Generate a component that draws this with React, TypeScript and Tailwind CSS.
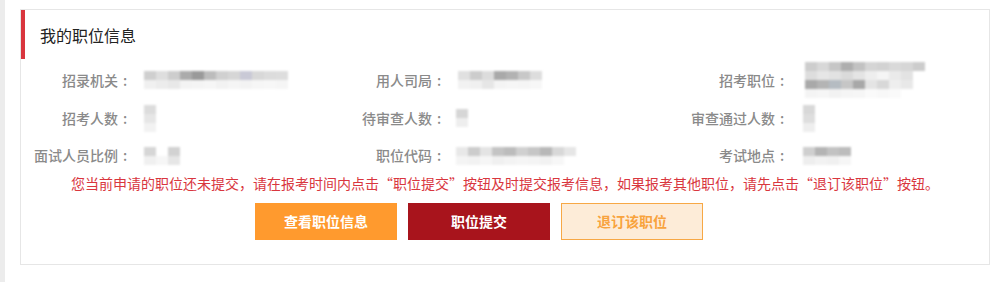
import React from "react";

type Cell = string;

function Mosaic({ rows, cell = 12, className = "" }: { rows: Cell[][]; cell?: number; className?: string }) {
  return (
    <div className={"flex flex-col blur-[0.8px] " + className}>
      {rows.map((r, i) => (
        <div key={i} className="flex">
          {r.map((c, j) => (
            <div key={j} style={{ backgroundColor: c, width: cell, height: cell * 0.75 }} />
          ))}
        </div>
      ))}
    </div>
  );
}

function Label({ w, children }: { w: string; children: React.ReactNode }) {
  return (
    <div className={"flex shrink-0 justify-end text-[14px] font-medium text-[#8a8a8a] " + w}>
      <span>{children}</span>
      <span className="inline-block w-[14px] text-center">:</span>
    </div>
  );
}

export default function App() {
  return (
    <div className="flex min-h-[282px] w-[1007px] bg-white font-['Microsoft_YaHei','Noto_Sans_CJK_SC',sans-serif]">
      <div className="w-[5px] shrink-0 bg-[#ececec]" />
      <div className="pl-[15px] pt-[9px]">
        <div className="w-[970px] border border-[#e6e6e6] bg-white pb-[24px]">
          <div className="flex h-[49px] items-center border-l-4 border-[#d9363e] pl-[15px] text-[16px] text-[#222]">
            我的职位信息
          </div>
          <div className="mt-[2px] flex h-[38px] items-center">
            <Label w="w-[111px]">招录机关</Label>
            <div className="w-[211px] pl-[12px]">
              <Mosaic
                cell={12}
                rows={[
                  ["#cfcfcf", "#dedede", "#cdcdcd", "#ababab", "#9a9a9a", "#bcbcbc", "#d0d0d0", "#d6d6d6", "#c9c9d6", "#d8d8d8", "#dcdcdc", "#dddddd"],
                  ["#f0f0f0", "#ececec", "#e8e8e8", "#f3f3f3", "#f4f4f4", "#f6f6f6", "#f2f2f2", "#f5f5f5", "#f3f3f3", "#f6f6f6", "#f7f7f7", "#f5f5f5"],
                ]}
              />
            </div>
            <Label w="w-[103px]">用人司局</Label>
            <div className="w-[220px] pl-[12px]">
              <Mosaic
                cell={12}
                rows={[
                  ["#e0e0e0", "#cccccc", "#dcdcdc", "#a9a9a9", "#b2b2b2", "#c8c8c8", "#dddddd"],
                  ["#f2f2f2", "#f0f0f0", "#e6e6e6", "#f4f4f4", "#f6f6f6", "#f5f5f5", "#f7f7f7"],
                ]}
              />
            </div>
            <Label w="w-[123px]">招考职位</Label>
            <div className="pl-[16px]">
              <Mosaic
                cell={12}
                rows={[
                  ["#cdcdcd", "#d8d8d8", "#c6c6c6", "#aeaeae", "#c2c2c2", "#d5d5d5", "#d2d2d2", "#d9d9d9", "#d6d6d6", "#cccccc"],
                  ["#dddddd", "#e6e6e6", "#e2e2e2", "#dadada", "#e4e4e4", "#eeeeee", "#f5f5f5", "#eaeaea", "#e3e3e3", "#ffffff"],
                  ["#a9a9a9", "#b4b4b4", "#b5bcc2", "#c6c6c6", "#a8a8a8", "#e4e4e4", "#d8d8d8", "#eeeeee", "#e8e8e8", "#ffffff"],
                  ["#f4f4f4", "#f6f6f6", "#f2f2f2", "#f5f5f5", "#f6f6f6", "#fafafa", "#f8f8f8", "#fafafa", "#ffffff", "#ffffff"],
                ]}
              />
            </div>
          </div>
          <div className="flex h-[38px] items-center">
            <Label w="w-[111px]">招考人数</Label>
            <div className="w-[211px] pl-[12px]">
              <Mosaic cell={12} rows={[["#dcdcdc"], ["#e6e6e6"], ["#f2f2f2"]]} />
            </div>
            <Label w="w-[103px]">待审查人数</Label>
            <div className="w-[220px] pl-[10px]">
              <Mosaic cell={12} rows={[["#d6d6d6"], ["#eeeeee"]]} />
            </div>
            <Label w="w-[123px]">审查通过人数</Label>
            <div className="pl-[14px]">
              <Mosaic cell={12} rows={[["#d8d8d8"], ["#dedede"], ["#eeeeee"]]} />
            </div>
          </div>
          <div className="flex h-[37px] items-center">
            <Label w="w-[111px]">面试人员比例</Label>
            <div className="w-[211px] pl-[12px]">
              <Mosaic cell={12} rows={[["#d6d6d6", "#ffffff", "#d2d2d2"], ["#f0f0f0", "#f6f6f6", "#e6e6e6"]]} />
            </div>
            <Label w="w-[103px]">职位代码</Label>
            <div className="w-[220px] pl-[10px]">
              <Mosaic
                cell={12}
                rows={[
                  ["#e8e8e8", "#cccccc", "#e4e4e4", "#c4c4c4", "#bcbcbc", "#d0d0d0", "#c6c6c6", "#b8b8b8", "#d8d8d8", "#e6e6e6"],
                  ["#f4f4f4", "#f2f2f2", "#f6f6f6", "#f0f0f0", "#f3f3f3", "#f5f5f5", "#f4f4f4", "#f2f2f2", "#f7f7f7", "#ffffff"],
                ]}
              />
            </div>
            <Label w="w-[123px]">考试地点</Label>
            <div className="pl-[14px]">
              <Mosaic cell={12} rows={[["#cfcfcf", "#b4b4b4", "#c2c2c2", "#bcbcbc"], ["#eeeeee", "#f2f2f2", "#f0f0f0", "#f6f6f6"]]} />
            </div>
          </div>
          <div className="text-center text-[14px] leading-[18px] text-[#d9363e]">
            您当前申请的职位还未提交，请在报考时间内点击“职位提交”按钮及时提交报考信息，如果报考其他职位，请先点击“退订该职位”按钮。
          </div>
          <div className="mt-[11px] flex gap-[11px] pl-[234px]">
            <button className="flex h-[37px] w-[142px] items-center justify-center bg-[#ff9a2e] text-[14px] font-bold text-white">
              查看职位信息
            </button>
            <button className="flex h-[37px] w-[142px] items-center justify-center bg-[#a8141c] text-[14px] font-bold text-white">
              职位提交
            </button>
            <button className="flex h-[37px] w-[142px] items-center justify-center border border-[#f7a845] bg-[#fdecd8] text-[14px] font-bold text-[#f8a33e]">
              退订该职位
            </button>
          </div>
        </div>
      </div>
    </div>
  );
}
